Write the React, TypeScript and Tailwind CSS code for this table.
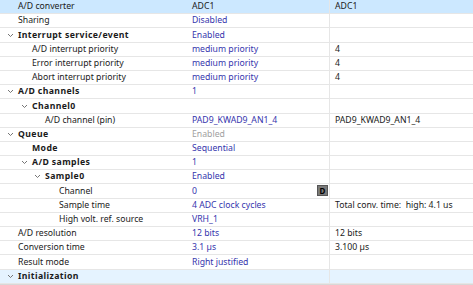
type Row = {
  label: string;
  level: number;
  bold?: boolean;
  chevron?: boolean;
  value?: string;
  valueClass?: string;
  extra?: string;
  badge?: boolean;
  bg?: string;
};

const rows: Row[] = [
  { label: 'A/D converter', level: 0, value: 'ADC1', valueClass: 'text-[#1a1a1a]', extra: 'ADC1', bg: 'bg-[#cce8ff]' },
  { label: 'Sharing', level: 0, value: 'Disabled' },
  { label: 'Interrupt service/event', level: 0, bold: true, chevron: true, value: 'Enabled' },
  { label: 'A/D interrupt priority', level: 1, value: 'medium priority', extra: '4' },
  { label: 'Error interrupt priority', level: 1, value: 'medium priority', extra: '4' },
  { label: 'Abort interrupt priority', level: 1, value: 'medium priority', extra: '4' },
  { label: 'A/D channels', level: 0, bold: true, chevron: true, value: '1' },
  { label: 'Channel0', level: 1, bold: true, chevron: true },
  { label: 'A/D channel (pin)', level: 2, value: 'PAD9_KWAD9_AN1_4', extra: 'PAD9_KWAD9_AN1_4' },
  { label: 'Queue', level: 0, bold: true, chevron: true, value: 'Enabled', valueClass: 'text-[#a0a0a0]' },
  { label: 'Mode', level: 1, bold: true, value: 'Sequential' },
  { label: 'A/D samples', level: 1, bold: true, chevron: true, value: '1' },
  { label: 'Sample0', level: 2, bold: true, chevron: true, value: 'Enabled' },
  { label: 'Channel', level: 3, value: '0', badge: true },
  { label: 'Sample time', level: 3, value: '4 ADC clock cycles', extra: 'Total conv. time:  high: 4.1 us' },
  { label: 'High volt. ref. source', level: 3, value: 'VRH_1' },
  { label: 'A/D resolution', level: 0, value: '12 bits', extra: '12 bits' },
  { label: 'Conversion time', level: 0, value: '3.1 µs', extra: '3.100 µs' },
  { label: 'Result mode', level: 0, value: 'Right justified' },
  { label: 'Initialization', level: 0, bold: true, chevron: true, bg: 'bg-[#e5f3ff]' },
];

const indents = ['pl-[18px]', 'pl-[32px]', 'pl-[45px]', 'pl-[59px]'];

const Chevron = () => (
  <svg width="7" height="5" viewBox="0 0 7 5" className="absolute left-[-11px] top-[2px]">
    <path d="M1 1 L3.5 3.5 L6 1" fill="none" stroke="#666" strokeWidth="0.9" />
  </svg>
);

export default function App() {
  return (
    <div className="flex h-[285px] w-[473px] flex-col overflow-hidden bg-white font-['Noto_Sans','Liberation_Sans',sans-serif] text-[8.7px] leading-none text-[#1a1a1a]">
      {rows.map((r, i) => (
        <div key={i} className={`flex h-[14.2px] shrink-0 border-b border-[#e6e6e6] ${r.bg ?? ''}`}>
          <div className={`flex w-[189px] items-center ${indents[r.level]}`}>
            <span className={`relative whitespace-nowrap ${r.bold ? 'font-bold tracking-[0.4px]' : ''}`}>
              {r.chevron && <Chevron />}
              {r.label}
            </span>
          </div>
          <div className="relative flex w-[141px] items-center border-r border-[#e6e6e6] pl-[3px]">
            <span className={`whitespace-nowrap ${r.valueClass ?? 'text-[#3535ad]'}`}>{r.value}</span>
            {r.badge && (
              <span className="absolute right-[1px] top-[1px] flex h-[11px] w-[11px] items-center justify-center border border-[#555] bg-[#7a7a7a] text-[8px] font-bold text-black">
                D
              </span>
            )}
          </div>
          <div className="flex flex-1 items-center pl-[5px]">
            <span className="whitespace-pre">{r.extra}</span>
          </div>
        </div>
      ))}
      <div className="flex-1 border-t border-[#d8d8d8] bg-[#f0f0f0]" />
    </div>
  );
}
